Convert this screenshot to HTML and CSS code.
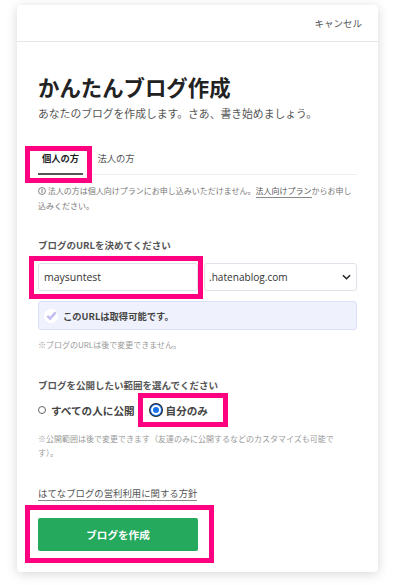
FILE: index.html
```html
<!DOCTYPE html>
<html lang="ja">
<head>
<meta charset="utf-8">
<title>かんたんブログ作成</title>
<link rel="stylesheet" href="styles.css">
</head>
<body>
<main class="card">
  <header class="top"><a class="cancel">キャンセル</a></header>
  <div class="content">
    <h1>かんたんブログ作成</h1>
    <p class="lead">あなたのブログを作成します。さあ、書き始めましょう。</p>
    <nav class="tabs">
      <span class="tab active">個人の方</span>
      <span class="tab">法人の方</span>
    </nav>
    <p class="notice"><svg class="info" viewBox="0 0 10 10" width="8" height="8"><circle cx="5" cy="5" r="4.3" fill="none" stroke="#555" stroke-width="0.9"/><path d="M5 2.4v5" stroke="#555" stroke-width="1"/></svg> 法人の方は個人向けプランにお申し込みいただけません。<span class="link">法人向けプラン</span>からお申し込みください。</p>
    <h2 class="label url-label">ブログのURLを決めてください</h2>
    <div class="url-row">
      <input class="url-input" type="text" value="maysuntest">
      <div class="domain"><span>.hatenablog.com</span>
        <svg viewBox="0 0 10 6" width="9" height="6"><path d="M1 1l4 4 4-4" fill="none" stroke="#222" stroke-width="1.6"/></svg>
      </div>
    </div>
    <div class="ok">
      <span class="ok-icon"><svg viewBox="0 0 12 12" width="11" height="11"><path d="M1.5 6.5l3 3 6-7" fill="none" stroke="#c3bdf0" stroke-width="2.8"/></svg></span>
      <span class="ok-text">このURLは取得可能です。</span>
    </div>
    <p class="hint">※ブログのURLは後で変更できません。</p>
    <h2 class="label scope-label">ブログを公開したい範囲を選んでください</h2>
    <div class="radios">
      <label class="radio"><span class="dot"></span>すべての人に公開</label>
      <label class="radio"><span class="dot on"></span>自分のみ</label>
    </div>
    <p class="hint scope-hint">※公開範囲は後で変更できます（友達のみに公開するなどのカスタマイズも可能です）。</p>
    <a class="policy">はてなブログの営利利用に関する方針</a>
    <button class="create">ブログを作成</button>
  </div>
</main>
<div class="mark mark-tab"></div>
<div class="mark mark-url"></div>
<div class="mark mark-radio"></div>
<div class="mark mark-btn"></div>
</body>
</html>
```
FILE: styles.css
```css
* { box-sizing: border-box; }
html, body { margin: 0; height: 585px; overflow: hidden; background: #fff; }
body {
  position: relative;
  padding: 5px 22px 0 17px;
  font-family: "Noto Sans CJK JP", "Open Sans", sans-serif;
  color: #444;
}
.card {
  height: 567px;
  background: #fff;
  border-radius: 4px;
  box-shadow: 0 2px 12px rgba(0,0,0,.16);
}
.top {
  height: 37px;
  border-bottom: 1px solid #e6e6e6;
  display: flex;
  justify-content: flex-end;
  align-items: center;
  padding-right: 16px;
}
.cancel { font-size: 9.5px; color: #555; }
.content { padding: 30px 21px 0 21px; }
h1 { margin: 0; font-size: 21.4px; line-height: 30px; font-weight: 700; color: #222; }
.lead { margin: 3px 0 0; font-size: 10.8px; line-height: 16px; color: #555; }
.tabs { display: flex; margin-top: 29px; height: 25px; border-bottom: 1px solid #eee; }
.tab { width: 50px; text-align: center; font-size: 9.3px; line-height: 17px; color: #555; }
.tab.active { width: 45px; margin-right: 8px; font-weight: 700; color: #222; height: 25px; border-bottom: 2px solid #555; }
.notice { margin: 8px 0 0; font-size: 8px; line-height: 15px; color: #777; }
.info { vertical-align: -0.5px; }
.link { color: #555; border-bottom: 1px solid #888; padding-bottom: 1px; }
.label { margin: 0; font-size: 9.5px; line-height: 14px; font-weight: 700; color: #555; }
.url-label { margin-top: 25px; }
.url-row { display: flex; margin-top: 11px; gap: 6px; }
.url-input {
  width: 160px; height: 28px; padding: 0 5px;
  border: 1px solid #dde3e8; border-radius: 3px;
  font: 10.5px "Open Sans", sans-serif; color: #333; background: #fff; outline: 0;
}
.domain {
  flex: 1; height: 28px; padding: 0 5px 0 4px;
  border: 1px solid #dde3e8; border-radius: 3px;
  display: flex; justify-content: space-between; align-items: center;
  font: 10.1px "Open Sans", sans-serif; color: #333;
}
.ok {
  margin-top: 10px; height: 29px; padding: 0 5px;
  background: #eff2fd; border: 1px solid #dcdffa; border-radius: 3px;
  display: flex; align-items: center; gap: 5px;
}
.ok-icon { width: 14px; height: 14px; border-radius: 50%; background: #fff; display: flex; align-items: center; justify-content: center; }
.ok-text { font-size: 9.3px; font-weight: 700; color: #444; }
.hint { margin: 7px 0 0; font-size: 8px; line-height: 15px; color: #999; }
.scope-label { margin-top: 26px; }
.radios { display: flex; margin-top: 7px; gap: 16px; height: 22px; align-items: center; }
.radio { display: flex; align-items: center; font-size: 10.6px; font-weight: 700; color: #444; gap: 5px; }
.dot { width: 8px; height: 8px; border: 1px solid #666; border-radius: 50%; background: #fff; }
.dot.on {
  width: 10px; height: 10px; background: #1a73e8; border: 0;
  box-shadow: inset 0 0 0 2px #fff, 0 0 0 1px #1a73e8, 0 0 0 2px #222;
}
.scope-hint { margin-top: 11px; line-height: 14px; padding-right: 15px; }
.policy {
  display: inline-block; margin-top: 26px;
  font-size: 9.4px; line-height: 14px; color: #555;
  border-bottom: 1px solid #888;
}
.create {
  display: block; width: 160px; height: 33px; margin-top: 16px;
  background: #25a95d; border: 0; border-radius: 2px;
  color: #fff; font: 700 10.6px "Noto Sans CJK JP", sans-serif;
}
.mark { position: absolute; border: 5px solid #ff0080; }
.mark-tab { left: 25px; top: 146px; width: 67px; height: 37px; }
.mark-url { left: 29px; top: 256px; width: 174px; height: 43px; }
.mark-radio { left: 138px; top: 393px; width: 90px; height: 34px; }
.mark-btn { left: 25px; top: 505px; width: 189px; height: 58px; }
```
